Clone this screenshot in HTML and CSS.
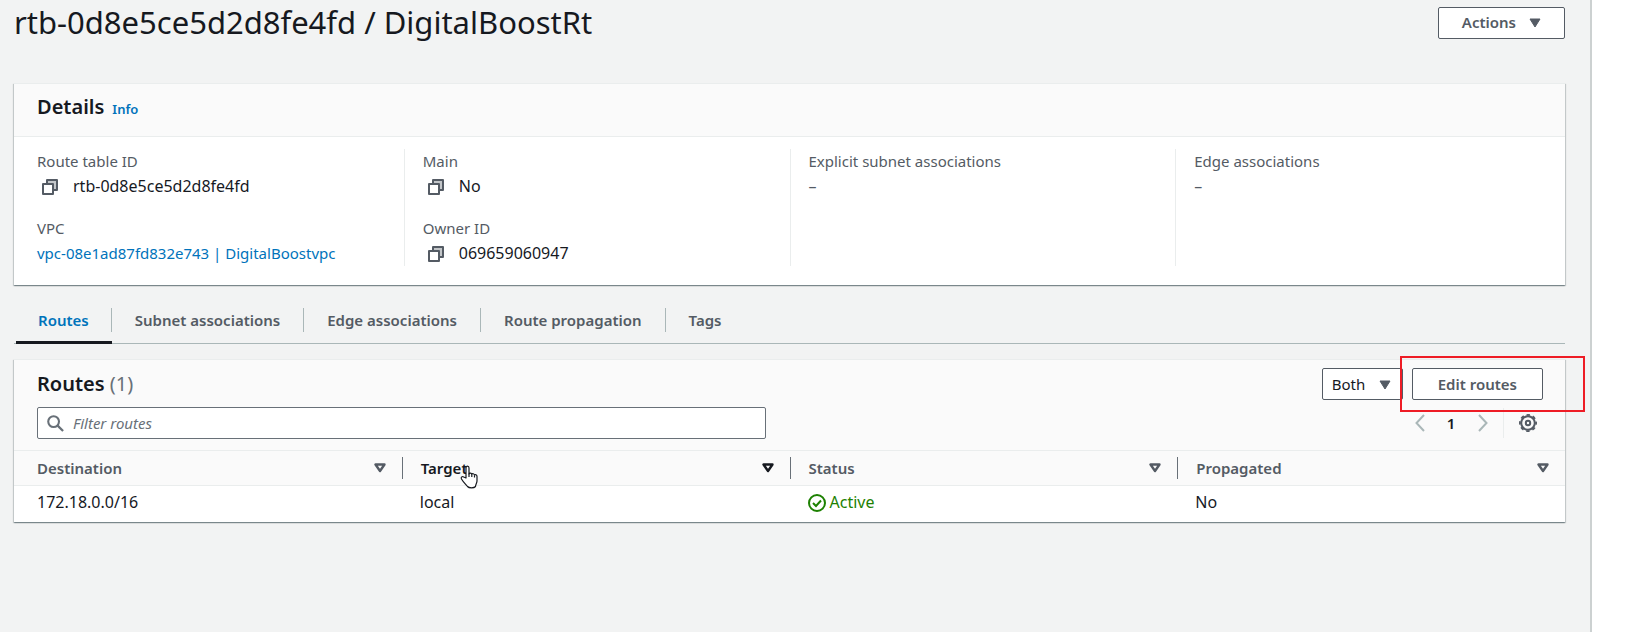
FILE: index.html
```html
<!DOCTYPE html>
<html lang="en">
<head>
<meta charset="utf-8">
<title>Route table details</title>
<link rel="stylesheet" href="styles.css">
</head>
<body>
<svg class="sprite" aria-hidden="true">
  <symbol id="copy" viewBox="0 0 16 16"><path d="M5 1h10v10H5z" fill="#c3c6c9" stroke="currentColor" stroke-width="2" stroke-linejoin="round"/><path d="M1 5h10v10H1z" fill="#fff" stroke="currentColor" stroke-width="2" stroke-linejoin="round"/></symbol>
  <symbol id="caret" viewBox="0 0 12 10"><path d="M1 1h10L6 9z" fill="currentColor" stroke="currentColor" stroke-linejoin="round"/></symbol>
  <symbol id="sort" viewBox="0 0 12 10"><path d="M1.500 1.500h9L6 8z" fill="none" stroke="currentColor" stroke-width="2.400" stroke-linejoin="round"/></symbol>
</svg>
<div class="shell">
  <main class="content">
    <header class="page-header">
      <h1 class="page-title">rtb-0d8e5ce5d2d8fe4fd / DigitalBoostRt</h1>
      <button class="button" type="button">Actions <svg class="caret"><use href="#caret"/></svg></button>
    </header>

    <section class="panel">
      <div class="details-header">
        <h2 class="panel-title">Details</h2>
        <a class="info" href="#info">Info</a>
      </div>
      <div class="details">
        <dl class="column">
          <div class="field"><dt>Route table ID</dt><dd><button class="copy" type="button" aria-label="Copy route table ID"><svg><use href="#copy"/></svg></button>rtb-0d8e5ce5d2d8fe4fd</dd></div>
          <div class="field"><dt>VPC</dt><dd><a href="#vpc">vpc-08e1ad87fd832e743 | DigitalBoostvpc</a></dd></div>
        </dl>
        <dl class="column">
          <div class="field"><dt>Main</dt><dd><button class="copy" type="button" aria-label="Copy main"><svg><use href="#copy"/></svg></button>No</dd></div>
          <div class="field"><dt>Owner ID</dt><dd><button class="copy" type="button" aria-label="Copy owner ID"><svg><use href="#copy"/></svg></button>069659060947</dd></div>
        </dl>
        <dl class="column">
          <div class="field"><dt>Explicit subnet associations</dt><dd class="empty">–</dd></div>
        </dl>
        <dl class="column">
          <div class="field"><dt>Edge associations</dt><dd class="empty">–</dd></div>
        </dl>
      </div>
    </section>

    <nav class="tabs">
      <a class="tab active" href="#routes"><span>Routes</span></a>
      <a class="tab" href="#subnets"><span>Subnet associations</span></a>
      <a class="tab" href="#edges"><span>Edge associations</span></a>
      <a class="tab" href="#propagation"><span>Route propagation</span></a>
      <a class="tab" href="#tags"><span>Tags</span></a>
    </nav>

    <section class="panel">
      <div class="routes-header">
        <div class="toolbar">
          <h2 class="panel-title">Routes <span class="count">(1)</span></h2>
          <div class="actions">
            <label class="select"><select aria-label="Route type"><option>Both</option></select><svg class="caret"><use href="#caret"/></svg></label>
            <div class="highlighted"><button class="button edit" type="button">Edit routes</button></div>
          </div>
        </div>
        <div class="toolbar">
          <label class="search">
            <svg viewBox="0 0 18 18"><circle cx="7" cy="7" r="5.700" fill="none" stroke="currentColor" stroke-width="2.200"/><path d="M11 11l6 6" stroke="currentColor" stroke-width="2.400"/></svg>
            <input type="text" placeholder="Filter routes" aria-label="Filter routes">
          </label>
          <div class="pagination">
            <button class="icon-button page" type="button" aria-label="Previous page"><svg viewBox="0 0 10 18"><path d="M9 1L1.500 9 9 17" fill="none" stroke="currentColor" stroke-width="2"/></svg></button>
            <button class="icon-button number" type="button">1</button>
            <button class="icon-button page" type="button" aria-label="Next page"><svg viewBox="0 0 10 18"><path d="M1 1l7.500 8L1 17" fill="none" stroke="currentColor" stroke-width="2"/></svg></button>
            <div class="preferences">
              <button class="icon-button gear" type="button" aria-label="Preferences"><svg viewBox="0 0 18 18" fill="none" stroke="currentColor" stroke-width="2"><circle cx="9" cy="9" r="6.800"/><circle cx="9" cy="9" r="8.100" stroke-width="1.800" stroke-dasharray="3.400 2.962" stroke-dashoffset="1.700"/><circle cx="9" cy="9" r="2.200"/></svg></button>
            </div>
          </div>
        </div>
      </div>
      <table class="routes">
        <thead>
          <tr>
            <th><div class="head">Destination <svg class="caret"><use href="#sort"/></svg></div></th>
            <th class="hovered"><div class="head">Target <svg class="caret"><use href="#sort"/></svg></div>
              <svg class="pointer" viewBox="0 0 18 24"><path d="M6 13V3c0-2.600 3-2.600 3 0v6c.3-1.300 2.600-1.200 2.800.3.500-1 2.500-.8 2.700.8.600-.8 2.500-.5 2.500 1.400V16c0 2-1.500 3.500-1.500 5.500-1.500 1.800-6.500 1.800-8 0C6 19.500 3.500 17.500 1.500 14c-1-2 .8-3 2.200-2z" fill="#fff" stroke="#16191f" stroke-width="1.200" stroke-linejoin="round"/><path d="M9 8.500V12M11.800 9.500V12M14.500 10.500V12.500" stroke="#16191f" stroke-width="1.200"/></svg>
            </th>
            <th><div class="head">Status <svg class="caret"><use href="#sort"/></svg></div></th>
            <th><div class="head">Propagated <svg class="caret"><use href="#sort"/></svg></div></th>
          </tr>
        </thead>
        <tbody>
          <tr>
            <td>172.18.0.0/16</td>
            <td>local</td>
            <td><span class="status"><svg viewBox="0 0 18 18" fill="none" stroke="currentColor" stroke-width="2"><circle cx="9" cy="9" r="8"/><path d="M5 9l3 3 5-5.500"/></svg>Active</span></td>
            <td>No</td>
          </tr>
        </tbody>
      </table>
    </section>
  </main>
  <aside class="side"></aside>
</div>
</body>
</html>
```
FILE: styles.css
```css
* { box-sizing: border-box; }
body {
  margin: 0;
  background: #fff;
  color: #16191f;
  font: 15px/25px "Noto Sans", "Open Sans", sans-serif;
}
h1, h2, dl, dd { margin: 0; }
a { color: #0073bb; text-decoration: none; }
button, input, select { font: inherit; color: inherit; }
svg { display: block; flex: none; }
.sprite { position: absolute; width: 0; height: 0; }

.shell { display: flex; min-height: 100vh; }
.content {
  flex: 1;
  min-width: 0;
  padding: 0 25px 0 14px;
  background: #f2f3f3;
}
.side { width: 41px; border-left: 2px solid #ccd1d1; background: #fff; }

.page-header {
  display: flex;
  justify-content: space-between;
  align-items: center;
  margin-bottom: 38px;
}
.page-title { font-size: 31px; line-height: 45px; font-weight: 400; }
.button {
  display: flex;
  align-items: center;
  gap: 13px;
  height: 32px;
  padding: 0 23px;
  border: 1px solid #545b64;
  border-radius: 2px;
  background: #fff;
  color: #545b64;
  font-weight: 600;
}
.edit { padding: 0 25px; }
.caret { width: 12px; height: 10px; }

.panel {
  background: #fff;
  border-top: 1px solid #eaeded;
  box-shadow: 0 1px 1px 0 rgba(0, 28, 36, .3), 1px 1px 1px 0 rgba(0, 28, 36, .15), -1px 1px 1px 0 rgba(0, 28, 36, .15);
}
.details-header {
  display: flex;
  align-items: baseline;
  gap: 8px;
  padding: 9px 23px 14px;
  border-bottom: 1px solid #eaeded;
  background: #fafafa;
}
.panel-title { font-size: 20px; line-height: 28px; font-weight: 600; }
.info { font-size: 13px; font-weight: 600; }
.details {
  display: grid;
  grid-template-columns: repeat(4, 1fr);
  gap: 18px;
  padding: 12px 22px 19px 4px;
}
.column {
  display: flex;
  flex-direction: column;
  gap: 17px;
  padding-left: 18px;
  border-left: 1px solid #eaeded;
}
.column:first-child { border-color: transparent; }
.field dt { color: #545b64; }
.field dd { display: flex; align-items: center; font-size: 16px; }
.field dd a { font-size: 15px; }
.field .empty { color: #545b64; }
.copy {
  width: 36px;
  padding: 0 5px;
  border: 0;
  background: none;
  color: #545b64;
}
.copy svg { width: 16px; height: 16px; }

.tabs {
  display: flex;
  margin: 13px 0 15px;
  padding-left: 2px;
  border-bottom: 1px solid #aab7b8;
}
.tab {
  margin-bottom: -1px;
  padding: 10px 0 9px;
  border-bottom: 3px solid transparent;
  color: #545b64;
  font-weight: 600;
}
.tab span {
  display: block;
  padding: 0 23px;
  border-right: 1px solid #aab7b8;
  line-height: 24px;
}
.tab:first-child span { padding: 0 22px; }
.tab:last-child span { border: 0; }
.tab.active { border-color: #16191f; color: #0073bb; }

.routes-header {
  display: flex;
  flex-direction: column;
  gap: 7px;
  padding: 8px 22px 11px 23px;
  background: #fafafa;
}
.toolbar { display: flex; justify-content: space-between; align-items: center; gap: 24px; }
.count { color: #687078; font-weight: 400; }
.actions { display: flex; gap: 9px; }
.select { position: relative; }
.select select {
  display: block;
  width: 81px;
  height: 32px;
  padding: 0 9px;
  border: 1px solid #545b64;
  border-radius: 2px;
  appearance: none;
  background: #fff;
}
.select .caret { position: absolute; right: 12px; top: 12px; color: #545b64; pointer-events: none; }
.highlighted { position: relative; }
.highlighted::after {
  content: "";
  position: absolute;
  inset: -12px -42px -12px -12px;
  border: 2px solid #ee1c25;
  pointer-events: none;
}
.search { position: relative; flex: 0 1 729px; }
.search svg { position: absolute; left: 10px; top: 8px; width: 17px; height: 17px; color: #687078; }
.search input {
  display: block;
  width: 100%;
  height: 32px;
  padding: 0 12px 0 35px;
  border: 1px solid #687078;
  border-radius: 2px;
  background: #fff;
}
.search input::placeholder { color: #687078; font-style: italic; opacity: 1; }
.pagination { display: flex; align-items: center; }
.icon-button {
  display: flex;
  justify-content: center;
  width: 31px;
  padding: 0;
  border: 0;
  background: none;
}
.page { color: #aab7b8; }
.page svg { width: 10px; height: 18px; }
.number { width: 32px; font-weight: 600; }
.preferences { margin-left: 5px; padding: 6px 0 6px 8px; border-left: 1px solid #eaeded; }
.gear { color: #545b64; }
.gear svg { width: 18px; height: 18px; }

.routes { width: 100%; table-layout: fixed; border-collapse: collapse; text-align: left; }
.routes th {
  position: relative;
  height: 35px;
  padding: 0 16px 1px 0;
  border-top: 1px solid #eaeded;
  border-bottom: 1px solid #eaeded;
  background: #fafafa;
  color: #545b64;
  font-weight: 600;
}
.routes th.hovered { color: #16191f; }
.head {
  display: flex;
  justify-content: space-between;
  align-items: center;
  padding-left: 18px;
  border-left: 1px solid #687078;
  line-height: 22px;
}
th:first-child .head { padding-left: 22px; border-color: transparent; }
.routes td { height: 36px; padding: 0 18px 2px; font-size: 16px; }
.routes td:first-child { padding-left: 23px; }
.status { display: flex; align-items: center; gap: 4px; color: #1d8102; }
.status svg { width: 18px; height: 18px; }
.pointer { position: absolute; left: 58px; top: 14px; width: 18px; height: 24px; z-index: 1; }
```
